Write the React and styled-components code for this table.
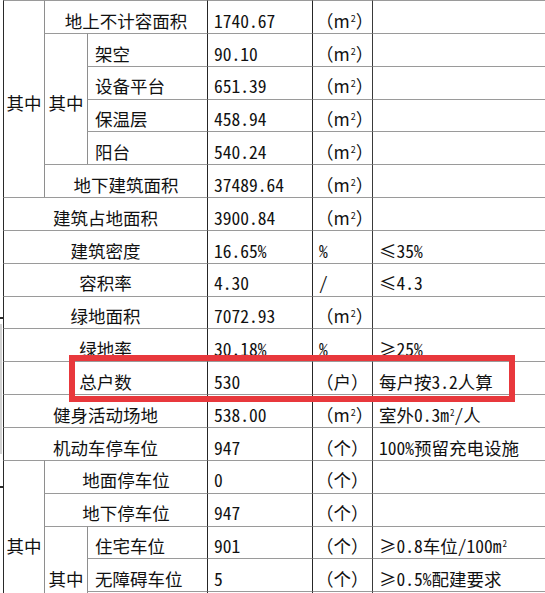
import React from "react";
import styled, { createGlobalStyle } from "styled-components";

const Global = createGlobalStyle`
  html, body {
    margin: 0;
    padding: 0;
    overflow: hidden;
    background: #ffffff;
  }
  body {
    font-family: "Noto Sans CJK SC", "Noto Sans", sans-serif;
  }
`;

const boundary = ["#2a2a2a", "#8e8e8e", "#8e8e8e", "#262626", "#262626", "#3a3a3a"];

const Page = styled.div`
  position: relative;
  width: 545px;
  height: 593px;
  overflow: hidden;
  padding-left: 3px;
  box-sizing: border-box;
  background:
    linear-gradient(#2a2a2a, #2a2a2a) 0 317px / 3px 2px no-repeat,
    linear-gradient(#2a2a2a, #2a2a2a) 0 486px / 3px 2px no-repeat,
    linear-gradient(#d2d2d2, #d2d2d2) 0 324px / 2px 130px no-repeat,
    #ffffff;
`;

const Table = styled.table`
  border-collapse: separate;
  border-spacing: 0;
  table-layout: fixed;
  width: 700px;
  font-family: "Noto Sans CJK SC", "Noto Sans", sans-serif;
  font-feature-settings: "hwid";
  font-size: 17.5px;
  color: #111111;
  line-height: 1;
`;

const Row = styled.tr`
  height: 32.85px;
`;

const Cell = styled.td`
  border-top: 1px solid #9a9a9a;
  border-left: 1px solid ${(p) => boundary[p.$col]};
  text-align: ${(p) => (p.$center ? "center" : "left")};
  padding: 7px 0 0 ${(p) => (p.$center ? 0 : p.$pad ?? 6)}px;
  vertical-align: middle;
  white-space: nowrap;
  overflow: hidden;
  font-feature-settings: ${(p) => (p.$full ? "normal" : "\"hwid\"")};
`;

const Sup = styled.span`
  font-size: 9px;
  vertical-align: 6px;
  margin-left: 1px;
`;

const Highlight = styled.div`
  position: absolute;
  left: 69px;
  top: 355px;
  width: 446px;
  height: 47px;
  box-sizing: border-box;
  border: 6px solid #e8383c;
  pointer-events: none;
`;

const Label = ({ col, span = 1, rows, left, children }) => (
  <Cell $col={col} colSpan={span} rowSpan={rows} $center={!left} $pad={7}>
    {children}
  </Cell>
);

const Data = ({ value, unit, note, full }) => (
  <>
    <Cell $col={3}>{value}</Cell>
    <Cell $col={4} $full={full} $pad={full ? 3 : 6}>{unit}</Cell>
    <Cell $col={5}>{note}</Cell>
  </>
);

const M2 = (
  <>
    （m<Sup>2</Sup>）
  </>
);
const GE = "（个）";

export default function App() {
  return (
    <>
      <Global />
      <Page>
        <Table>
          <colgroup>
            <col style={{ width: 41 }} />
            <col style={{ width: 43 }} />
            <col style={{ width: 120 }} />
            <col style={{ width: 105 }} />
            <col style={{ width: 60 }} />
            <col style={{ width: 331 }} />
          </colgroup>
          <tbody>
            <Row>
              <Label col={0} rows={6}>其中</Label>
              <Label col={1} span={2}>地上不计容面积</Label>
              <Data value="1740.67" unit={M2} full />
            </Row>
            <Row>
              <Label col={1} rows={4}>其中</Label>
              <Label col={2} left>架空</Label>
              <Data value="90.10" unit={M2} full />
            </Row>
            <Row>
              <Label col={2} left>设备平台</Label>
              <Data value="651.39" unit={M2} full />
            </Row>
            <Row>
              <Label col={2} left>保温层</Label>
              <Data value="458.94" unit={M2} full />
            </Row>
            <Row>
              <Label col={2} left>阳台</Label>
              <Data value="540.24" unit={M2} full />
            </Row>
            <Row>
              <Label col={1} span={2}>地下建筑面积</Label>
              <Data value="37489.64" unit={M2} full />
            </Row>
            <Row>
              <Label col={0} span={3}>建筑占地面积</Label>
              <Data value="3900.84" unit={M2} full />
            </Row>
            <Row>
              <Label col={0} span={3}>建筑密度</Label>
              <Data value="16.65%" unit="%" note="≤35%" />
            </Row>
            <Row>
              <Label col={0} span={3}>容积率</Label>
              <Data value="4.30" unit="/" note="≤4.3" />
            </Row>
            <Row>
              <Label col={0} span={3}>绿地面积</Label>
              <Data value="7072.93" unit={M2} full />
            </Row>
            <Row>
              <Label col={0} span={3}>绿地率</Label>
              <Data value="30.18%" unit="%" note="≥25%" />
            </Row>
            <Row>
              <Label col={0} span={3}>总户数</Label>
              <Data value="530" unit="（户）" note="每户按3.2人算" full />
            </Row>
            <Row>
              <Label col={0} span={3}>健身活动场地</Label>
              <Data value="538.00" unit={M2} note={<>室外0.3m<Sup>2</Sup>/人</>} full />
            </Row>
            <Row>
              <Label col={0} span={3}>机动车停车位</Label>
              <Data value="947" unit={GE} note="100%预留充电设施" full />
            </Row>
            <Row>
              <Label col={0} rows={5}>其中</Label>
              <Label col={1} span={2}>地面停车位</Label>
              <Data value="0" unit={GE} full />
            </Row>
            <Row>
              <Label col={1} span={2}>地下停车位</Label>
              <Data value="947" unit={GE} full />
            </Row>
            <Row>
              <Label col={1} rows={3}>其中</Label>
              <Label col={2} left>住宅车位</Label>
              <Data value="901" unit={GE} note={<>≥0.8车位/100m<Sup>2</Sup></>} full />
            </Row>
            <Row>
              <Label col={2} left>无障碍车位</Label>
              <Data value="5" unit={GE} note="≥0.5%配建要求" full />
            </Row>
            <Row>
              <Label col={2} left />
              <Data />
            </Row>
          </tbody>
        </Table>
        <Highlight />
      </Page>
    </>
  );
}
